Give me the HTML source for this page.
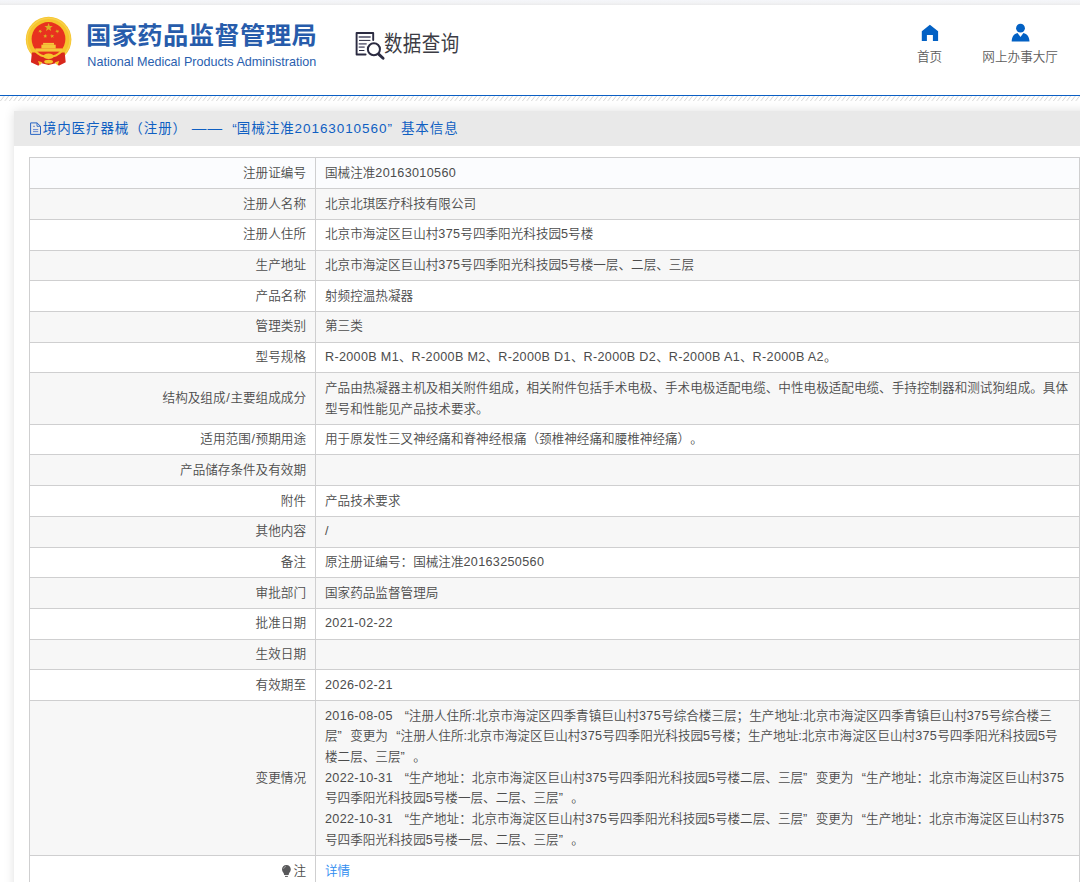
<!DOCTYPE html>
<html lang="zh-CN">
<head>
<meta charset="utf-8">
<title>国家药品监督管理局 数据查询</title>
<style>
html,body{margin:0;padding:0;background:#fff;}
html{overflow:hidden;}
body{width:1080px;height:882px;overflow:hidden;position:relative;
  font-family:"Liberation Sans","Noto Sans CJK SC",sans-serif;color:#4c4c4c;}
#z{zoom:0.9;width:1200px;position:relative;}
.sl{margin:0 .055em;}
.ql,.qr{display:inline-block;width:1em;letter-spacing:0;}
.ql{text-align:right;}
.qr{text-align:left;}
.v,.phead{text-spacing-trim:space-all;}
.n{letter-spacing:.0265em;}
.topstrip{height:5.4px;background:linear-gradient(#f5f6fa,#f2f3f5 55%,#ebebec);}
.header{height:100.2px;position:relative;background:#fff;border-bottom:1px solid #0b5fc4;}
.hatch{height:5.6px;}
.t-cn{position:absolute;left:96.1px;top:15.1px;font-size:26.9px;font-weight:bold;color:#275cab;letter-spacing:.42px;transform:scaleX(1.045);transform-origin:0 0;white-space:nowrap;line-height:40px;}
.t-en{position:absolute;left:97px;top:54.4px;font-size:14px;letter-spacing:0;color:#2a5eae;white-space:nowrap;line-height:18px;}
.dq{position:absolute;left:394px;top:29px;white-space:nowrap;}
.dq span{position:absolute;left:32.6px;top:-1.3px;font-size:20.5px;letter-spacing:.55px;color:#3c3c44;line-height:30px;transform:scaleY(1.16);transform-origin:50% 50%;}
.nav{position:absolute;top:47.5px;text-align:center;font-size:14px;line-height:20px;color:#5c5c5c;font-weight:350;white-space:nowrap;width:120px;}
.panel{position:absolute;left:15.5px;top:123.3px;width:1300px;background:#fff;box-shadow:0 0 11px rgba(0,0,0,.13);}
.phead{height:39px;background:#e9e9e9;line-height:41px;font-size:15px;letter-spacing:1.03px;color:#0f5fc2;padding-left:32px;white-space:nowrap;}
.phead .n{letter-spacing:1.03px;}
.pbody{padding:12.65px 0 30px 16.7px;}
.tb{width:1167.8px;border-top:1px solid #cfcfd0;border-left:1px solid #cfcfd0;box-sizing:border-box;}
.r{display:flex;align-items:stretch;border-bottom:1px solid #cfcfd0;background:#fff;font-size:14px;line-height:23px;font-weight:350;}
.r:first-child{background:#fbfcfe;}
.r:nth-child(even){background:#f7f7f7;}
.l{width:317.8px;box-sizing:border-box;padding:5px 10px;text-align:right;border-right:1px solid #cfcfd0;display:flex;align-items:center;justify-content:flex-end;white-space:nowrap;flex:none;}
.v{flex:1;padding:5px 10px;border-right:1px solid #cfcfd0;white-space:nowrap;min-height:23px;}
a{color:#2d8cf0;text-decoration:none;}
</style>
</head>
<body>
<div id="z">
<div class="topstrip"></div>
<div class="header">
  <div class="t-cn">国家药品监督管理局</div>
  <div class="t-en">National Medical Products Administration</div>
  <div class="dq"><span>数据查询</span></div>
  <div class="nav" style="left:972.9px">首页</div>
  <div class="nav" style="left:1073.5px">网上办事大厅</div>
</div>
<div class="hatch"></div>
<div class="panel">
  <div class="phead">境内医疗器械（注册）<span style="display:inline-block;margin-left:7px;margin-right:1.33px;transform:scaleX(1.085)">——</span><span class="ql">“</span>国械注准<span class="n">20163010560</span><span class="qr">”</span>基本信息</div>
  <div class="pbody">
  <div class="tb">
    <div class="r"><div class="l">注册证编号</div><div class="v">国械注准<span class="n">20163010560</span></div></div>
    <div class="r"><div class="l">注册人名称</div><div class="v">北京北琪医疗科技有限公司</div></div>
    <div class="r"><div class="l">注册人住所</div><div class="v">北京市海淀区巨山村<span class="n">375</span>号四季阳光科技园5号楼</div></div>
    <div class="r"><div class="l">生产地址</div><div class="v">北京市海淀区巨山村<span class="n">375</span>号四季阳光科技园5号楼一层、二层、三层</div></div>
    <div class="r"><div class="l">产品名称</div><div class="v">射频控温热凝器</div></div>
    <div class="r"><div class="l">管理类别</div><div class="v">第三类</div></div>
    <div class="r"><div class="l">型号规格</div><div class="v"><span class="n">R-2000B M1</span>、<span class="n">R-2000B M2</span>、<span class="n">R-2000B D1</span>、<span class="n">R-2000B D2</span>、<span class="n">R-2000B A1</span>、<span class="n">R-2000B A2</span>。</div></div>
    <div class="r"><div class="l">结构及组成<span class="sl">/</span>主要组成成分</div><div class="v">产品由热凝器主机及相关附件组成，相关附件包括手术电极、手术电极适配电缆、中性电极适配电缆、手持控制器和测试狗组成。具体<br>型号和性能见产品技术要求。</div></div>
    <div class="r"><div class="l">适用范围<span class="sl">/</span>预期用途</div><div class="v">用于原发性三叉神经痛和脊神经根痛（颈椎神经痛和腰椎神经痛）。</div></div>
    <div class="r"><div class="l">产品储存条件及有效期</div><div class="v"></div></div>
    <div class="r"><div class="l">附件</div><div class="v">产品技术要求</div></div>
    <div class="r"><div class="l">其他内容</div><div class="v">/</div></div>
    <div class="r"><div class="l">备注</div><div class="v">原注册证编号：国械注准<span class="n">20163250560</span></div></div>
    <div class="r"><div class="l">审批部门</div><div class="v">国家药品监督管理局</div></div>
    <div class="r"><div class="l">批准日期</div><div class="v"><span class="n">2021-02-22</span></div></div>
    <div class="r"><div class="l">生效日期</div><div class="v"></div></div>
    <div class="r"><div class="l">有效期至</div><div class="v"><span class="n">2026-02-21</span></div></div>
    <div class="r"><div class="l">变更情况</div><div class="v"><span class="n">2016-08-05</span> <span class="ql">“</span>注册人住所:北京市海淀区四季青镇巨山村<span class="n">375</span>号综合楼三层；生产地址:北京市海淀区四季青镇巨山村<span class="n">375</span>号综合楼三<br>层<span class="qr">”</span>变更为<span class="ql">“</span>注册人住所:北京市海淀区巨山村<span class="n">375</span>号四季阳光科技园5号楼；生产地址:北京市海淀区巨山村<span class="n">375</span>号四季阳光科技园5号<br>楼二层、三层<span class="qr">”</span>。<br><span class="n">2022-10-31</span> <span class="ql">“</span>生产地址：北京市海淀区巨山村<span class="n">375</span>号四季阳光科技园5号楼二层、三层<span class="qr">”</span>变更为<span class="ql">“</span>生产地址：北京市海淀区巨山村<span class="n">375</span><br>号四季阳光科技园5号楼一层、二层、三层<span class="qr">”</span>。<br><span class="n">2022-10-31</span> <span class="ql">“</span>生产地址：北京市海淀区巨山村<span class="n">375</span>号四季阳光科技园5号楼二层、三层<span class="qr">”</span>变更为<span class="ql">“</span>生产地址：北京市海淀区巨山村<span class="n">375</span><br>号四季阳光科技园5号楼一层、二层、三层<span class="qr">”</span>。</div></div>
    <div class="r"><div class="l">注</div><div class="v"><a>详情</a></div></div>
  </div>
  </div>
</div>
</div>
<svg id="gfx" width="1080" height="102" viewBox="0 0 1080 102" style="position:absolute;left:0;top:0;">
  <defs><pattern id="ht" x="0" y="96" width="4.5" height="5" patternUnits="userSpaceOnUse"><path d="M0.2 5.2 L4.3 -0.2" stroke="#c4c4c4" stroke-width="0.75"/></pattern></defs>
  <rect x="0" y="96" width="1080" height="5" fill="url(#ht)"/>
  <!-- national emblem -->
  <g>
    <circle cx="48.6" cy="39.6" r="22.8" fill="#f6c42c"/>
    <circle cx="48.6" cy="39.6" r="21.4" fill="none" stroke="#f8d04a" stroke-width="1.4"/>
    <path d="M31.9 52.4 L30.9 62.3 L38.4 65.8 L40.6 62.9 L48.6 64.9 L56.6 62.9 L58.8 65.8 L65.7 62.3 L64.7 52.4 Z" fill="#d8271c"/>
    <circle cx="48.5" cy="39" r="16.9" fill="#e8321f"/>
    <path d="M35.2 51 A17.9 17.9 0 0 0 61.8 51" fill="none" stroke="#f6c42c" stroke-width="2"/>
    <ellipse cx="48.6" cy="56.3" rx="4.8" ry="2.7" fill="#f6c42c"/>
    <ellipse cx="48.6" cy="61.7" rx="4.4" ry="1.9" fill="#f6c42c"/>
    <path d="M38 61 L42.4 62.2 L39.7 65.6 Z M59.2 61 L54.8 62.2 L57.5 65.6 Z" fill="#f6c42c"/>
    <g fill="#f5c63a">
      <rect x="43.1" y="42.9" width="10.9" height="1.9"/>
      <rect x="41.4" y="44.7" width="14.3" height="3.8"/>
      <rect x="35.3" y="48.4" width="26.9" height="3.2"/>
    </g>
    <g fill="#dcae22"><polygon points="48.60,23.00 49.69,25.90 52.78,26.04 50.36,27.97 51.19,30.96 48.60,29.25 46.01,30.96 46.84,27.97 44.42,26.04 47.51,25.90"/><polygon points="41.30,29.39 41.04,30.92 42.35,31.76 40.82,31.99 40.43,33.49 39.74,32.10 38.19,32.19 39.30,31.11 38.73,29.67 40.10,30.38"/><polygon points="56.20,29.39 57.40,30.38 58.77,29.67 58.20,31.11 59.31,32.19 57.76,32.10 57.07,33.49 56.68,31.99 55.15,31.76 56.46,30.92"/><polygon points="45.68,33.93 45.96,35.46 47.48,35.79 46.12,36.53 46.26,38.08 45.14,37.01 43.72,37.63 44.38,36.23 43.36,35.07 44.89,35.27"/><polygon points="51.72,33.93 52.51,35.27 54.04,35.07 53.02,36.23 53.68,37.63 52.26,37.01 51.14,38.08 51.28,36.53 49.92,35.79 51.44,35.46"/></g>
  </g>
  <!-- data query icon -->
  <g fill="none" stroke="#2b2b41" stroke-linecap="round" stroke-linejoin="round">
    <path d="M373.2 40 V33 H356.6 V54.5 H365.6" stroke-width="1.9"/>
    <path d="M359.4 37 H370" stroke-width="1.8" stroke="#77778a"/>
    <path d="M359.4 40.4 H370" stroke-width="1"/>
    <path d="M359.4 43.8 H366" stroke-width="1.8" stroke="#77778a"/>
    <path d="M359.4 47.1 H364" stroke-width="1.8" stroke="#77778a"/>
    <path d="M359.4 50.5 H364" stroke-width="1"/>
    <circle cx="373.9" cy="49.3" r="6.05" stroke-width="2" fill="#fff"/>
    <path d="M378.9 54.4 L383.1 58.3" stroke-width="2.9"/>
  </g>
  <!-- home -->
  <path d="M929.9 24.7 L938.1 31.2 V41.1 H932.9 V34.9 H926.9 V41.1 H921.8 V31.2 Z" fill="#0361c4"/>
  <!-- person -->
  <circle cx="1020.5" cy="28.2" r="4.4" fill="#0361c4"/>
  <path d="M1011.7 41.5 C1011.7 37 1014 33.8 1017.5 33 L1020.5 37 L1023.4 33 C1027 33.8 1029.5 37 1029.5 41.5 Z" fill="#0361c4"/>
</svg>
<svg width="14" height="16" viewBox="0 0 14 16" style="position:absolute;left:29px;top:121px;">
  <path d="M1.6 1.9 H8 L11.5 5.3 V13.4 H1.6 Z" fill="none" stroke="#2a66c4" stroke-width="1"/>
  <path d="M8 1.9 V5.3 H11.5" fill="none" stroke="#2a66c4" stroke-width="0.9"/>
  <path d="M4 5.3 H6 M4 8.6 H9.2 M4 10.6 H9.2" stroke="#5a7fd0" stroke-width="0.9"/>
</svg>
<svg width="14" height="16" viewBox="280 863 14 16" style="position:absolute;left:280px;top:863px;">
  <path d="M286.4 865 C289 865 290.8 867 290.8 869.3 C290.8 871.3 289.6 872.3 289 873.6 L288.6 875.1 H284.2 L283.8 873.6 C283.2 872.3 282 871.3 282 869.3 C282 867 283.8 865 286.4 865 Z" fill="#58585a"/>
  <path d="M283.5 868.9 A3.1 3.1 0 0 1 286 866.4" fill="none" stroke="#fff" stroke-opacity=".55" stroke-width=".7"/>
  <path d="M285 876.4 H287.9" stroke="#58585a" stroke-width="1"/>
</svg>
</body>
</html>
